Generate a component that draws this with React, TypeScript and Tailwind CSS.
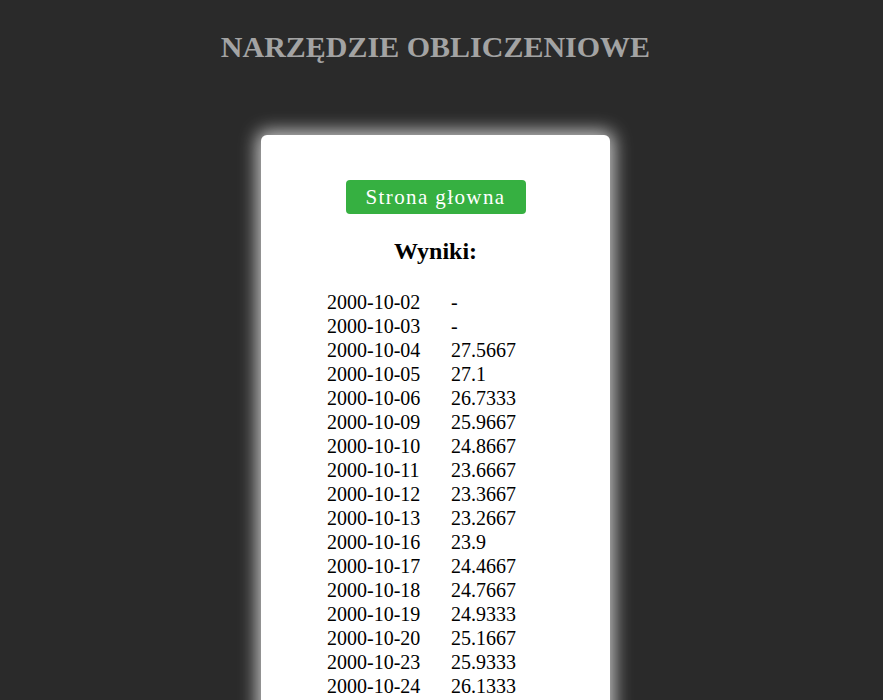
const rows: [string, string][] = [
  ['2000-10-02', '-'],
  ['2000-10-03', '-'],
  ['2000-10-04', '27.5667'],
  ['2000-10-05', '27.1'],
  ['2000-10-06', '26.7333'],
  ['2000-10-09', '25.9667'],
  ['2000-10-10', '24.8667'],
  ['2000-10-11', '23.6667'],
  ['2000-10-12', '23.3667'],
  ['2000-10-13', '23.2667'],
  ['2000-10-16', '23.9'],
  ['2000-10-17', '24.4667'],
  ['2000-10-18', '24.7667'],
  ['2000-10-19', '24.9333'],
  ['2000-10-20', '25.1667'],
  ['2000-10-23', '25.9333'],
  ['2000-10-24', '26.1333'],
];

export default function App() {
  return (
    <div className="min-h-screen bg-[#2a2a2a] pr-[12px] font-['Liberation_Serif',serif]">
      <h1 className="pt-[30px] text-center text-[30px] font-bold leading-[34px] text-[#a3a3a3]">
        NARZĘDZIE OBLICZENIOWE
      </h1>
      <div className="mx-auto mt-[71px] w-[349px] rounded-[6px] bg-white pb-10 pt-[45px] shadow-[0_0_18px_4px_rgba(255,255,255,0.75)]">
        <div className="flex justify-center">
          <button className="h-[34px] w-[180px] rounded-[4px] bg-[#36b041] text-[21px] leading-[34px] tracking-[1.4px] text-white">
            Strona głowna
          </button>
        </div>
        <h2 className="mt-[23px] text-center text-[24px] font-bold leading-[28px] text-black">Wyniki:</h2>
        <div className="ml-[66px] mt-[25px] grid grid-cols-[124px_auto] text-[20px] leading-[24px] text-black">
          {rows.map(([d, v]) => (
            <div key={d} className="contents">
              <span>{d}</span>
              <span>{v}</span>
            </div>
          ))}
        </div>
      </div>
    </div>
  );
}
